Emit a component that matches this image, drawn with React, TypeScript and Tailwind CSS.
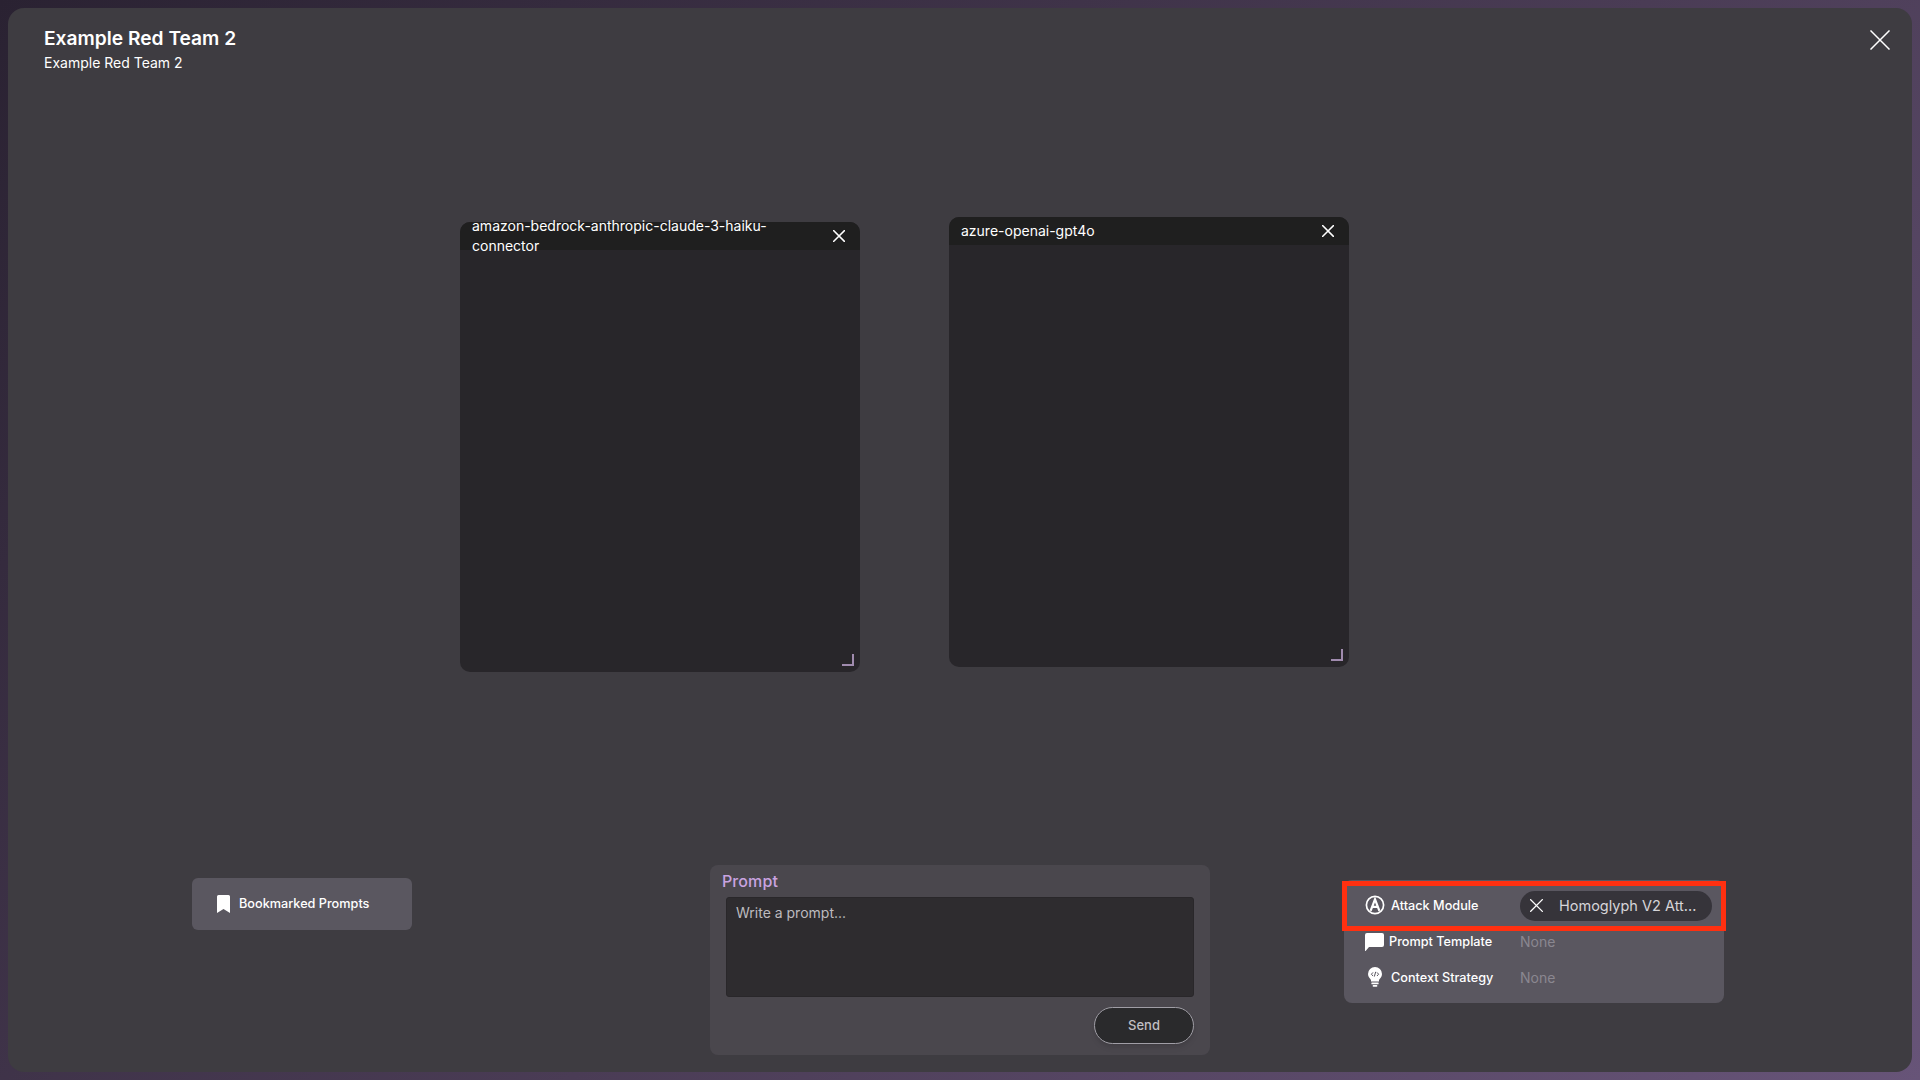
import React from "react";

function CloseIcon({ size, stroke = 1.5 }: { size: number; stroke?: number }) {
  return (
    <svg width={size} height={size} viewBox="0 0 20 20" fill="none" stroke="#ffffff" strokeWidth={stroke} strokeLinecap="square" className="shrink-0">
      <path d="M1 1 L19 19 M19 1 L1 19" />
    </svg>
  );
}

function AIcon() {
  return (
    <svg width="20" height="20" viewBox="0 0 20 20" fill="none" className="shrink-0">
      <circle cx="10" cy="10" r="8.6" stroke="#fff" strokeWidth="1.7" />
      <path d="M5.6 15.8 L10 4.4 L14.4 15.8 M7.2 11.8 H12.8" stroke="#fff" strokeWidth="2.2" />
    </svg>
  );
}

function BubbleIcon() {
  return (
    <svg width="19" height="18" viewBox="0 0 19 18" fill="#fff" className="shrink-0">
      <path d="M2 0 H17 A2 2 0 0 1 19 2 V12 A2 2 0 0 1 17 14 H4 L0.6 18 H0 V2 A2 2 0 0 1 2 0 Z" />
    </svg>
  );
}

function BulbIcon() {
  return (
    <svg width="14" height="20" viewBox="0 0 14 20" className="shrink-0">
      <path d="M7 0 A7 7 0 0 1 14 7 C14 10 12 11.5 11 13 V14.5 H3 V13 C2 11.5 0 10 0 7 A7 7 0 0 1 7 0 Z" fill="#fff" />
      <rect x="3.4" y="15.6" width="7.2" height="1.7" rx="0.5" fill="#fff" />
      <rect x="4.6" y="18.1" width="4.8" height="1.7" rx="0.8" fill="#fff" />
      <path d="M5 5.4 L3.4 7.2 L5 9 M9 5.4 L10.6 7.2 L9 9 M7.7 4.8 L6.3 9.6" fill="none" stroke="#5a5760" strokeWidth="1" />
    </svg>
  );
}

function BookmarkIcon() {
  return (
    <svg width="13" height="18" viewBox="0 0 13 18" fill="#fff" className="shrink-0">
      <path d="M1.5 0 H11.5 A1.5 1.5 0 0 1 13 1.5 V18 L6.5 14 L0 18 V1.5 A1.5 1.5 0 0 1 1.5 0 Z" />
    </svg>
  );
}

function ResizeCorner() {
  return <div className="absolute right-[6px] bottom-[6px] h-3 w-3 border-r-2 border-b-2 border-[#a08bae]" />;
}

function ChatWindow({ name, className }: { name: string; className: string }) {
  return (
    <div className={`absolute flex h-[450px] w-[400px] flex-col rounded-[10px] bg-[#28262a] ${className}`}>
      <div className="flex h-7 shrink-0 items-center justify-between rounded-t-[10px] bg-[#1f1f1f] pl-3 pr-[15px]">
        <span className="w-[320px] text-sm leading-5 text-white">{name}</span>
        <CloseIcon size={12} stroke={2.5} />
      </div>
      <ResizeCorner />
    </div>
  );
}

export default function App() {
  return (
    <div className="h-[1080px] w-full bg-[linear-gradient(135deg,#2a2232_0%,#4a3c55_55%,#675478_100%)] p-2 font-['Inter',sans-serif]">
      <div className="flex h-[1064px] flex-col rounded-2xl bg-[#3e3c41]">
        <div className="flex shrink-0 items-start justify-between pl-9 pr-[22px] pt-4">
          <div>
            <h1 className="text-[19.2px] font-semibold leading-7 text-white">Example Red Team 2</h1>
            <p className="mt-px text-sm leading-5 text-white">Example Red Team 2</p>
          </div>
          <div className="mt-[6px]">
            <CloseIcon size={20} />
          </div>
        </div>

        <div className="relative flex-1">
          <ChatWindow name="amazon-bedrock-anthropic-claude-3-haiku-connector" className="left-[452px] top-[149px]" />
          <ChatWindow name="azure-openai-gpt4o" className="left-[941px] top-[144px]" />
        </div>

        <div className="flex shrink-0 items-start pb-[17px]">
          <button className="ml-[184px] mt-[13px] flex h-[52px] w-[220px] items-center gap-[9px] rounded-md bg-[#5a5760] pl-[25px] text-[12.7px] font-medium text-white">
            <BookmarkIcon />
            Bookmarked Prompts
          </button>

          <div className="ml-[298px] h-[190px] w-[500px] rounded-lg bg-[#4a474d] pl-3 pr-4">
            <div className="pt-[6px] text-base leading-5 font-medium tracking-[0.1px] text-[#c9a3e0]">Prompt</div>
            <textarea
              readOnly
              placeholder="Write a prompt..."
              className="ml-[4px] mt-[6px] block h-[100px] w-[468px] resize-none rounded-[3px] border border-[#29272a] bg-[#2e2c2f] px-[9px] py-[5px] text-sm leading-5 outline-none placeholder:text-[#bdbbbf]"
            />
            <div className="mt-[10px] flex justify-end">
              <button className="h-[37px] w-[100px] rounded-full border border-[#a09ea6] bg-[#2a2a2c] text-[13px] font-medium text-[#c0bfc3] shadow-md">
                Send
              </button>
            </div>
          </div>

          <div className="relative ml-[134px] mt-[15px] h-[123px] w-[380px] rounded-lg bg-[#5a5760] text-[12.7px] font-medium text-white">
            <div className="flex h-[50px] items-center pl-[21px]">
              <AIcon />
              <span className="ml-[6px] mt-[2px] w-[129px]">Attack Module</span>
              <div className="mt-px flex h-[30px] w-[192px] items-center rounded-full bg-[#36343a] pl-[10px] text-[14.5px] font-normal text-[#d6d5d9]">
                <CloseIcon size={13} stroke={2} />
                <span className="ml-4">Homoglyph V2 Att...</span>
              </div>
            </div>
            <div className="flex h-6 items-center pl-[21px]">
              <BubbleIcon />
              <span className="ml-[5px] w-[131px]">Prompt Template</span>
              <span className="text-sm font-normal text-[#8a8790]">None</span>
            </div>
            <div className="mt-[11px] flex h-6 items-center pl-[24px]">
              <BulbIcon />
              <span className="ml-[9px] mt-px w-[129px]">Context Strategy</span>
              <span className="mt-px text-sm font-normal text-[#8a8790]">None</span>
            </div>
            <div className="absolute -left-[2px] -right-[2px] top-[1px] h-[50px] border-[5px] border-[#ff3010]" />
          </div>
        </div>
      </div>
    </div>
  );
}
